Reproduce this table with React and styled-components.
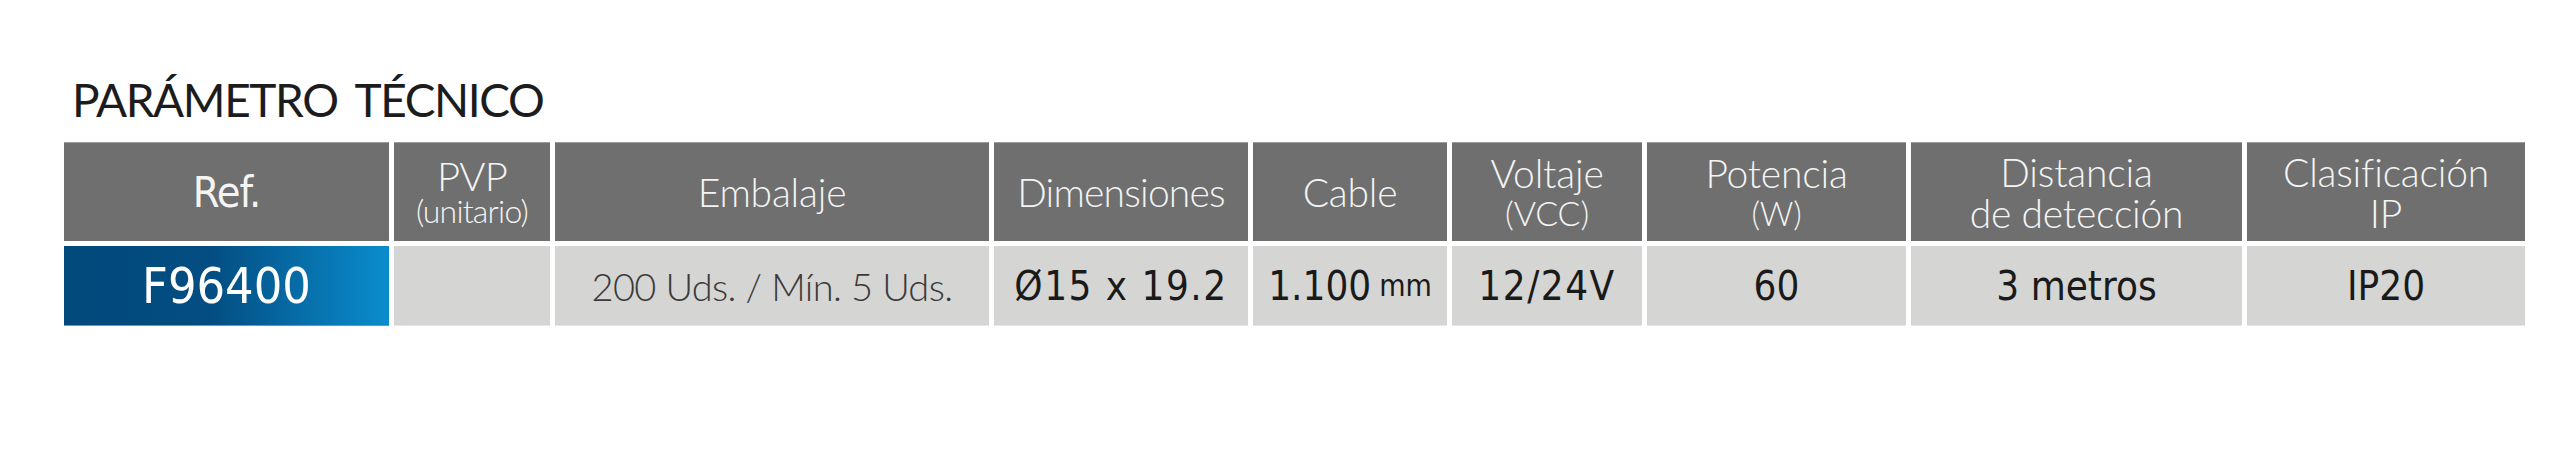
import React from "react";
import styled, { createGlobalStyle } from "styled-components";

const GlobalStyle = createGlobalStyle`
  html, body {
    margin: 0;
    padding: 0;
    background: #ffffff;
  }
  body {
    font-family: Lato, "Open Sans", sans-serif;
  }
`;

const Page = styled.div`
  width: 2560px;
  height: 456px;
  box-sizing: border-box;
  padding: 72px 0 0 64px;
  background: #ffffff;
`;

const Title = styled.h2`
  margin: 0 0 14px 8px;
  font-family: Lato, "Open Sans", sans-serif;
  font-weight: 400;
  font-size: 46px;
  line-height: 56px;
  letter-spacing: -1.4px;
  word-spacing: 8px;
  color: #1c1c1c;
`;

const Table = styled.div`
  display: grid;
  grid-template-columns: 325px 156px 434px 254px 194px 190px 259px 331px 278px;
  grid-template-rows: 99px 80px;
  column-gap: 5px;
  row-gap: 5px;
`;

const HeadCell = styled.div`
  display: flex;
  flex-direction: column;
  align-items: center;
  justify-content: center;
  background: #6e6f6e;
  border-top: 1px solid #9a9b9a;
  box-sizing: border-box;
  color: #f4f4f4;
  font-family: Lato, "Open Sans", sans-serif;
  font-weight: 300;
  text-align: center;
  white-space: nowrap;
  overflow: hidden;
`;

const HeadLine = styled.span`
  display: block;
  font-size: ${(p) => p.$size || 39}px;
  line-height: ${(p) => p.$lh || 40}px;
  letter-spacing: ${(p) => (p.$tight ? "-0.8px" : "-0.2px")};
`;

const RefHead = styled.span`
  font-family: "Liberation Sans Narrow", "DejaVu Sans Condensed", "Liberation Sans", sans-serif;
  font-weight: 400;
  font-size: 43px;
  letter-spacing: -1px;
`;

const DataCell = styled.div`
  display: flex;
  align-items: center;
  justify-content: center;
  box-sizing: border-box;
  white-space: nowrap;
  background: ${(p) =>
    p.$accent
      ? "linear-gradient(90deg, #02497b 0%, #034d82 45%, #0a8dcd 100%)"
      : "#d5d5d4"};
  border-bottom: 1px solid ${(p) => (p.$accent ? "#5f9cc4" : "#e6e6e5")};
  color: ${(p) => (p.$accent ? "#ffffff" : p.$light ? "#3a3a3a" : "#1a1a1a")};
  font-family: ${(p) =>
    p.$light
      ? 'Lato, "Open Sans", sans-serif'
      : '"Liberation Sans Narrow", "DejaVu Sans Condensed", "Liberation Sans", sans-serif'};
  font-weight: ${(p) => (p.$light ? 300 : 400)};
  font-size: ${(p) => (p.$accent ? 50 : p.$light ? 38 : 40)}px;
  letter-spacing: ${(p) => (p.$light ? "-0.6px" : p.$spaced ? "1.5px" : "0px")};
`;

const Unit = styled.span`
  font-size: 30px;
  margin-left: 8px;
  letter-spacing: 0;
`;

const headers = [
  { key: "ref", content: <RefHead>Ref.</RefHead> },
  {
    key: "pvp",
    content: (
      <>
        <HeadLine $size={40} $lh={38} $tight>PVP</HeadLine>
        <HeadLine $size={32} $lh={32} $tight>(unitario)</HeadLine>
      </>
    ),
  },
  { key: "emb", content: <HeadLine>Embalaje</HeadLine> },
  { key: "dim", content: <HeadLine $tight>Dimensiones</HeadLine> },
  { key: "cab", content: <HeadLine>Cable</HeadLine> },
  {
    key: "vol",
    content: (
      <>
        <HeadLine $lh={42}>Voltaje</HeadLine>
        <HeadLine $size={34} $lh={38}>(VCC)</HeadLine>
      </>
    ),
  },
  {
    key: "pot",
    content: (
      <>
        <HeadLine $lh={42}>Potencia</HeadLine>
        <HeadLine $size={33} $lh={38}>(W)</HeadLine>
      </>
    ),
  },
  {
    key: "dis",
    content: (
      <>
        <HeadLine $lh={42}>Distancia</HeadLine>
        <HeadLine $lh={40}>de detección</HeadLine>
      </>
    ),
  },
  {
    key: "cla",
    content: (
      <>
        <HeadLine $lh={42}>Clasificación</HeadLine>
        <HeadLine $lh={40}>IP</HeadLine>
      </>
    ),
  },
];

export default function App() {
  return (
    <Page>
      <GlobalStyle />
      <Title>PARÁMETRO TÉCNICO</Title>
      <Table>
        {headers.map((h) => (
          <HeadCell key={h.key}>{h.content}</HeadCell>
        ))}
        <DataCell $accent>F96400</DataCell>
        <DataCell />
        <DataCell $light>200 Uds. / Mín. 5 Uds.</DataCell>
        <DataCell $spaced>Ø15 x 19.2</DataCell>
        <DataCell>
          1.100<Unit>mm</Unit>
        </DataCell>
        <DataCell $spaced>12/24V</DataCell>
        <DataCell>60</DataCell>
        <DataCell>3 metros</DataCell>
        <DataCell>IP20</DataCell>
      </Table>
    </Page>
  );
}
